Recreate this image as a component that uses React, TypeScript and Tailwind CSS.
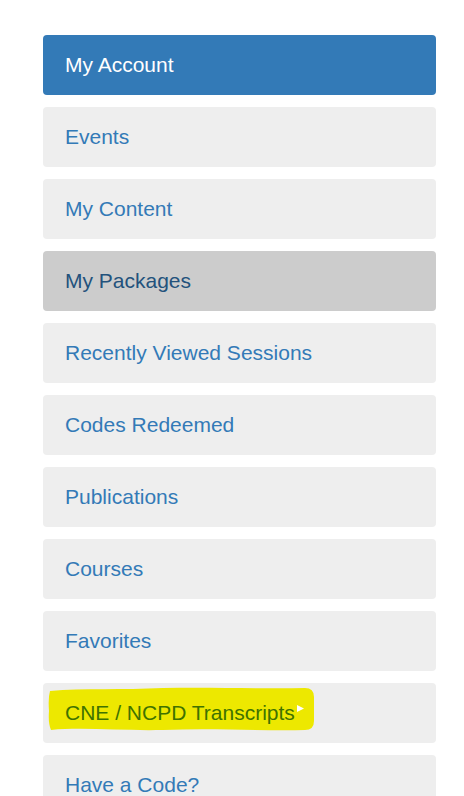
import React from 'react';

const items = [
  'My Account',
  'Events',
  'My Content',
  'My Packages',
  'Recently Viewed Sessions',
  'Codes Redeemed',
  'Publications',
  'Courses',
  'Favorites',
  'CNE / NCPD Transcripts',
  'Have a Code?',
];

function Highlight() {
  return (
    <svg className="absolute inset-0 h-full w-full pointer-events-none" viewBox="0 0 393 60">
      <path
        d="M7,8 C40,5 80,7 120,5 C170,4 220,6 262,5 Q271,5 271,14 L271,38 Q271,47 262,47 C220,48 170,45 120,47 C80,48 40,44 8,47 Q5,40 6,28 Q5,15 7,8 Z"
        fill="#ede800"
      />
    </svg>
  );
}

export default function App() {
  return (
    <div className="min-h-screen bg-white pl-[43px] pt-[35px]" style={{ fontFamily: '"Liberation Sans", Arial, sans-serif' }}>
      <ul className="w-[393px] flex flex-col gap-[12px]">
        {items.map((label, i) => {
          const active = i === 0;
          const hover = i === 3;
          const marked = i === 9;
          return (
            <li
              key={label}
              className={
                'relative h-[60px] flex items-center pl-[22px] rounded-[4px] text-[21px] ' +
                (active
                  ? 'bg-[#337ab7] text-white'
                  : hover
                  ? 'bg-[#cccccc] text-[#23527c]'
                  : marked
                  ? 'bg-[#eeeeee] text-[#3f7300]'
                  : 'bg-[#eeeeee] text-[#337ab7]')
              }
            >
              {marked && <Highlight />}
              <span className="relative">{label}</span>
              {marked && (
                <svg className="absolute left-[254px] top-[22px]" width="7" height="7" viewBox="0 0 7 7">
                  <path d="M0,0 L7,3.5 L0,7 Z" fill="#ffffff" />
                </svg>
              )}
            </li>
          );
        })}
      </ul>
    </div>
  );
}
